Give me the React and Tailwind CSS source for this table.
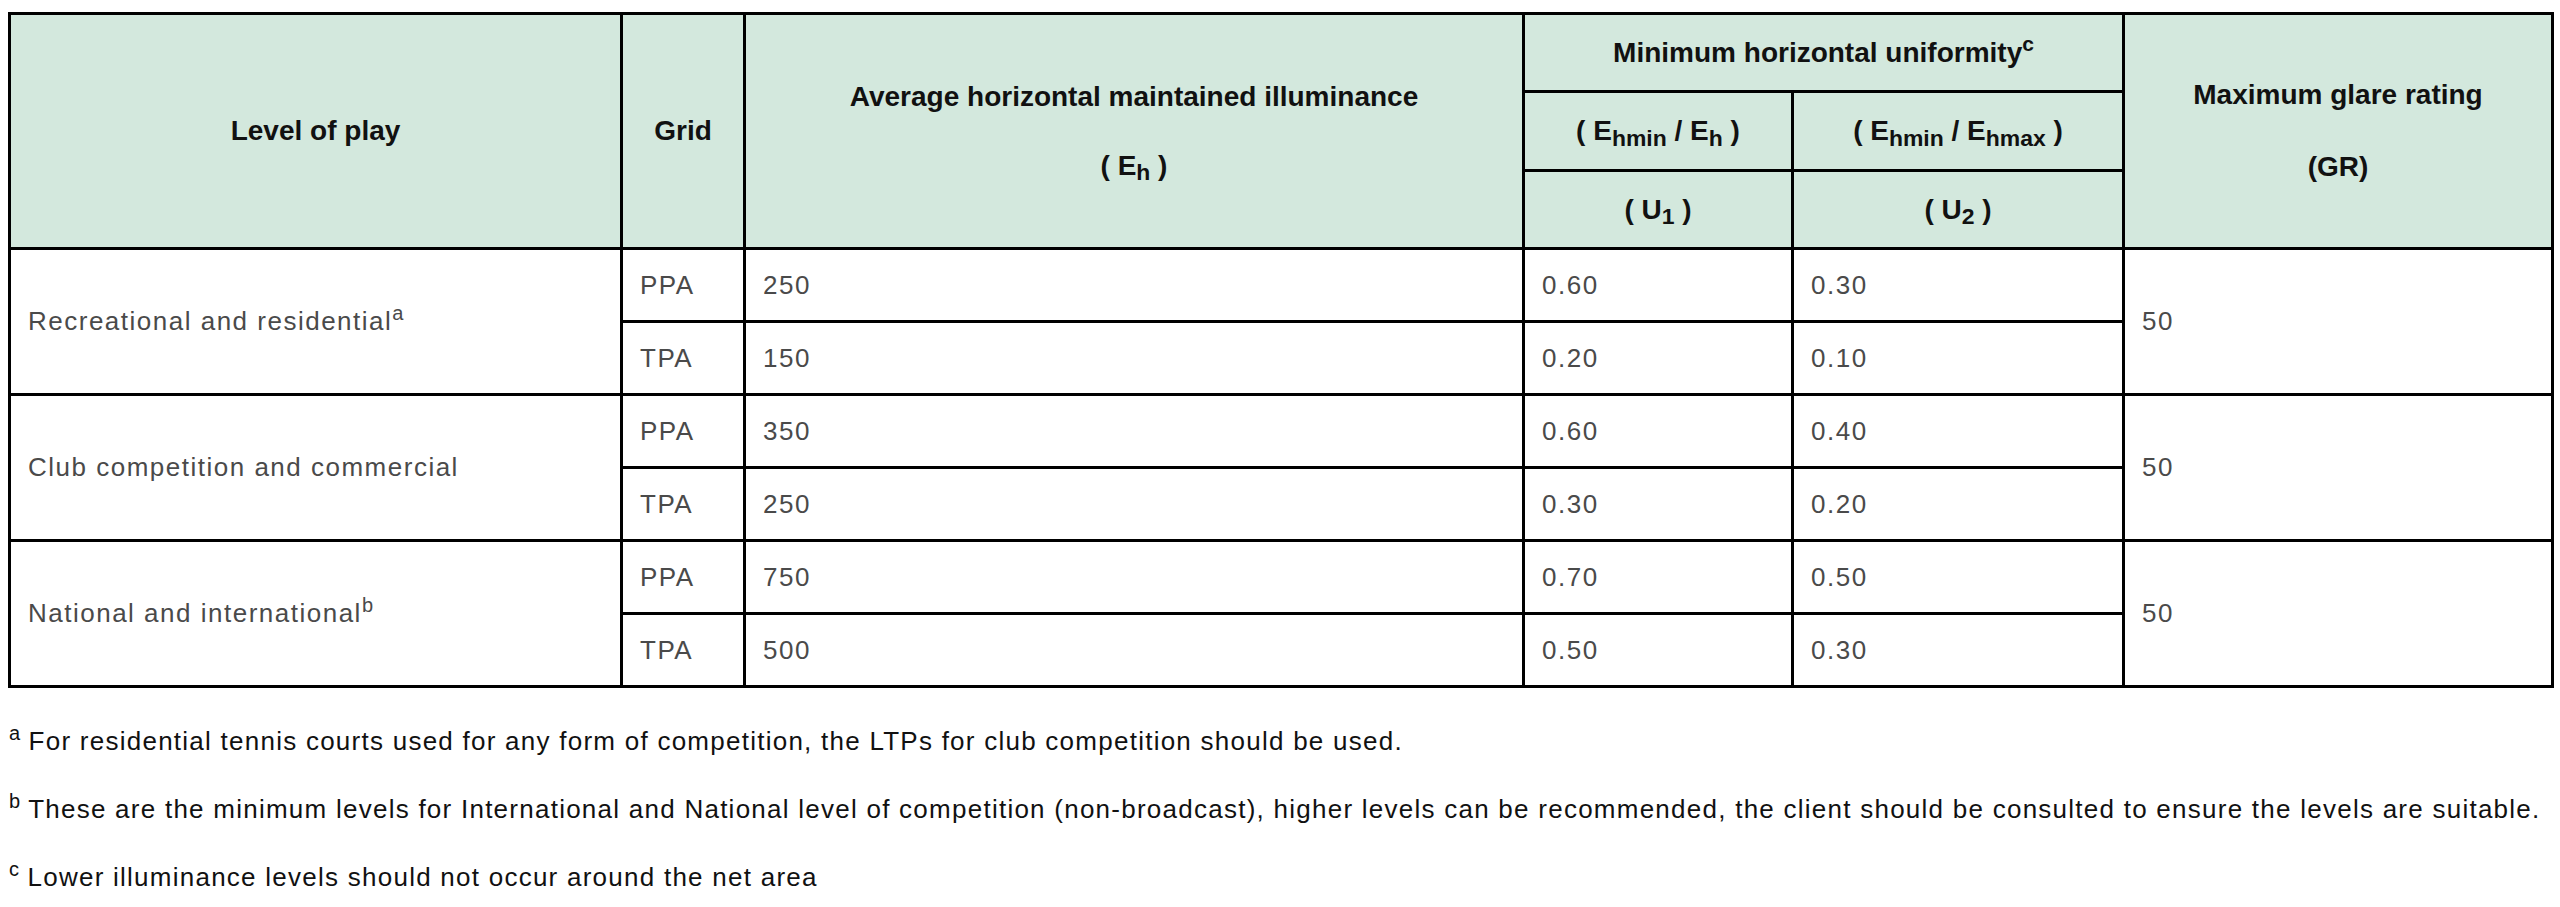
import React from 'react';

const groups = [
  {
    level: 'Recreational and residential',
    note: 'a',
    rows: [
      { grid: 'PPA', eh: '250', u1: '0.60', u2: '0.30' },
      { grid: 'TPA', eh: '150', u1: '0.20', u2: '0.10' },
    ],
    gr: '50',
  },
  {
    level: 'Club competition and commercial',
    rows: [
      { grid: 'PPA', eh: '350', u1: '0.60', u2: '0.40' },
      { grid: 'TPA', eh: '250', u1: '0.30', u2: '0.20' },
    ],
    gr: '50',
  },
  {
    level: 'National and international',
    note: 'b',
    rows: [
      { grid: 'PPA', eh: '750', u1: '0.70', u2: '0.50' },
      { grid: 'TPA', eh: '500', u1: '0.50', u2: '0.30' },
    ],
    gr: '50',
  },
];

const th = 'border-[3px] border-black bg-[#d3e8dd] text-center align-middle font-bold text-[28px] text-[#111]';
const td = 'border-[3px] border-black pl-[17px] pr-2 align-middle text-left text-[26px] tracking-[1.5px] text-[#4a4a4a]';
const sub = 'text-[0.82em]';

const App = () => {
  return (
    <div className="min-h-screen bg-white px-2 pt-3 font-['Liberation_Sans',Arial,sans-serif]">
      <table className="w-[2543px] table-fixed border-collapse border-[3px] border-black">
        <colgroup>
          <col className="w-[612px]" />
          <col className="w-[123px]" />
          <col className="w-[779px]" />
          <col className="w-[269px]" />
          <col className="w-[331px]" />
          <col className="w-[429px]" />
        </colgroup>
        <thead>
          <tr className="h-[78px]">
            <th rowSpan={3} className={th}>Level of play</th>
            <th rowSpan={3} className={th}>Grid</th>
            <th rowSpan={3} className={th}>
              <p>Average horizontal maintained illuminance</p>
              <p className="mt-[27px]">( E<sub className={sub}>h</sub> )</p>
            </th>
            <th colSpan={2} className={th}>
              Minimum horizontal uniformity<sup>c</sup>
            </th>
            <th rowSpan={3} className={th}>
              <p>Maximum glare rating</p>
              <p className="mt-[30px]">(GR)</p>
            </th>
          </tr>
          <tr className="h-[79px]">
            <th className={th}>
              ( E<sub className={sub}>hmin</sub> / E<sub className={sub}>h</sub> )
            </th>
            <th className={th}>
              ( E<sub className={sub}>hmin</sub> / E<sub className={sub}>hmax</sub> )
            </th>
          </tr>
          <tr className="h-[78px]">
            <th className={th}>
              ( U<sub className={sub}>1</sub> )
            </th>
            <th className={th}>
              ( U<sub className={sub}>2</sub> )
            </th>
          </tr>
        </thead>
        <tbody>
          {groups.map((g) =>
            g.rows.map((r, i) => (
              <tr key={g.level + r.grid} className="h-[73px]">
                {i === 0 && (
                  <td rowSpan={2} className={td}>
                    {g.level}
                    {g.note && <sup className="text-[20px] tracking-normal">{g.note}</sup>}
                  </td>
                )}
                <td className={td}>{r.grid}</td>
                <td className={td}>{r.eh}</td>
                <td className={td}>{r.u1}</td>
                <td className={td}>{r.u2}</td>
                {i === 0 && (
                  <td rowSpan={2} className={td}>
                    {g.gr}
                  </td>
                )}
              </tr>
            ))
          )}
        </tbody>
      </table>

      {/* footnotes */}
      <div className="mt-[33px] pl-[1px] text-[26px] leading-[40px] tracking-[1.25px] text-[#111]">
        <p>
          <sup className="text-[20px] tracking-normal">a</sup> For residential tennis courts used for any form of competition, the LTPs for club competition should be used.
        </p>
        <p className="mt-[28px]">
          <sup className="text-[20px] tracking-normal">b</sup> These are the minimum levels for International and National level of competition (non-broadcast), higher levels can be recommended, the client should be consulted to ensure the levels are suitable.
        </p>
        <p className="mt-[28px]">
          <sup className="text-[20px] tracking-normal">c</sup> Lower illuminance levels should not occur around the net area
        </p>
      </div>
    </div>
  );
};

export default App;
